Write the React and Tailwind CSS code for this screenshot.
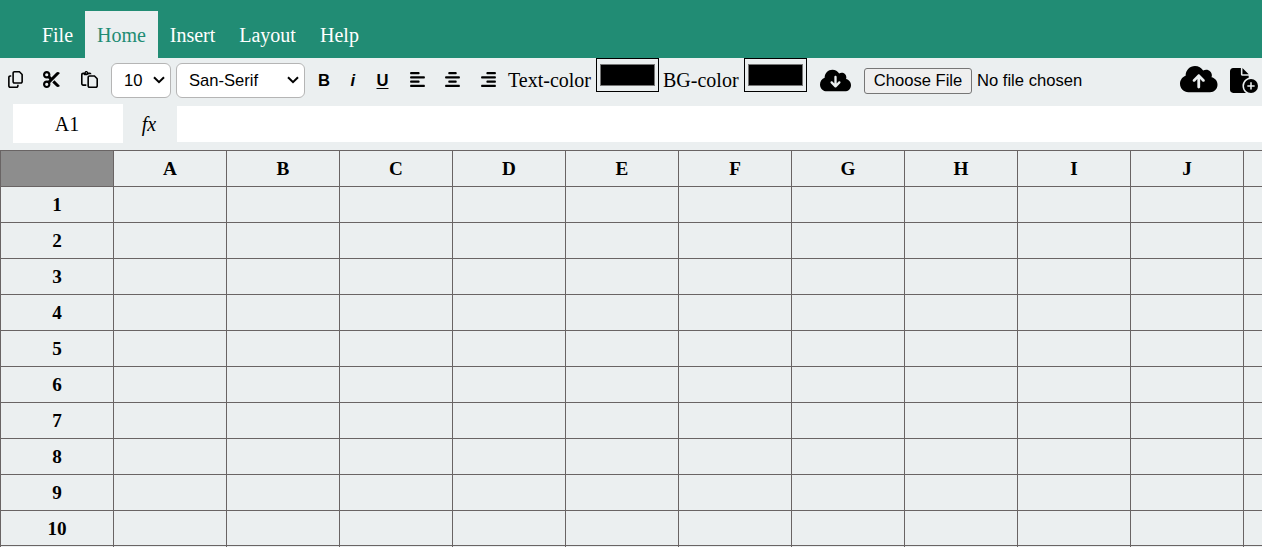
import {
  FaRegCopy,
  FaRegPaste,
  FaScissors,
  FaAlignLeft,
  FaAlignCenter,
  FaAlignRight,
  FaFileCirclePlus,
  FaCloudArrowDown,
  FaCloudArrowUp,
} from "react-icons/fa6";

const MENU = [
  { label: "File", width: "w-[55px]" },
  { label: "Home", width: "w-[73px]", active: true },
  { label: "Insert", width: "w-[69px]" },
  { label: "Layout", width: "w-[81px]" },
  { label: "Help", width: "w-[63px]" },
];

const COLUMNS = ["A", "B", "C", "D", "E", "F", "G", "H", "I", "J", ""];
const ROWS = [1, 2, 3, 4, 5, 6, 7, 8, 9, 10];

function Chevron() {
  return (
    <svg className="h-[8px] w-[12px] shrink-0" viewBox="0 0 12 8" fill="none" stroke="black" strokeWidth="2">
      <path d="M1 1.2 6 6.2 11 1.2" />
    </svg>
  );
}

function Select({ value, className }) {
  return (
    <div className={`flex h-[35px] shrink-0 items-center justify-between rounded-[6px] border border-[#b5b5b5] bg-white pl-3 pr-[5px] font-['Liberation_Sans',sans-serif] text-[16.6px] ${className}`}>
      <span className="pt-[3px]">{value}</span>
      <Chevron />
    </div>
  );
}

function Swatch({ className }) {
  return (
    <div className={`h-[34px] w-[63px] shrink-0 self-start border border-black px-[3px] pt-[5px] ${className}`}>
      <div className="h-[22px] w-full border border-[#767676] bg-black" />
    </div>
  );
}

export default function App() {
  return (
    <div className="h-[547px] w-full overflow-hidden bg-[#ebeff0] font-['Liberation_Serif',serif] text-[20px] text-black">
      <nav className="flex h-[58px] items-end bg-[#218c74] pl-[30px]">
        {MENU.map((m) => (
          <div key={m.label} className={`flex h-[47px] items-center justify-center pt-px ${m.width} ${m.active ? "bg-[#ebeff0] text-[#218c74]" : "text-white"}`}>
            {m.label}
          </div>
        ))}
      </nav>

      <div className="flex h-[44px] items-center whitespace-nowrap">
        <FaRegCopy className="mb-px ml-[7px] h-[17px] w-[17px] shrink-0" />
        <FaScissors className="mb-px ml-[19px] h-[17px] w-[17px] shrink-0" />
        <FaRegPaste className="mb-px ml-[20.5px] h-[17px] w-[17px] shrink-0" />
        <Select value="10" className="ml-[13.5px] w-[60px]" />
        <Select value="San-Serif" className="ml-[5px] w-[129px]" />
        <div className="ml-[13px] flex w-[90.5px] shrink-0 items-center pt-[2px] font-['Liberation_Sans',sans-serif] text-[16.6px] font-bold">
          <span className="w-[32.5px]">B</span>
          <span className="w-[26px] italic">i</span>
          <span className="underline decoration-1 underline-offset-2">U</span>
        </div>
        <FaAlignLeft className="mb-px h-[17px] w-[17px] shrink-0" />
        <FaAlignCenter className="mb-px ml-[18.5px] h-[17px] w-[17px] shrink-0" />
        <FaAlignRight className="mb-px ml-[18.5px] h-[17px] w-[17px] shrink-0" />
        <span className="ml-[11.5px] w-[84px] shrink-0 pb-px">Text-color</span>
        <Swatch className="ml-[4px]" />
        <span className="ml-[4px] w-[77px] shrink-0 pb-px">BG-color</span>
        <Swatch className="ml-[4px]" />
        <FaCloudArrowDown className="ml-[13px] h-[25px] w-[31px] shrink-0" />
        <div className="ml-[13px] mt-px flex h-[26px] w-[108px] shrink-0 items-center justify-center rounded-[3px] border border-[#767676] bg-[#efefef] pt-[2px] font-['Liberation_Sans',sans-serif] text-[16.6px]">
          Choose File
        </div>
        <span className="ml-[5px] pt-[3px] font-['Liberation_Sans',sans-serif] text-[16.6px]">No file chosen</span>
        <FaCloudArrowUp className="mb-[2px] ml-auto h-[30px] w-[37.5px] shrink-0" />
        <FaFileCirclePlus className="ml-[12.5px] mr-[4px] h-[25px] w-[28px] shrink-0" />
      </div>

      <div className="flex h-[48px] items-start pl-[13px] pt-[2px]">
        <div className="flex h-[39px] w-[110px] items-center justify-center bg-white pr-[2px]">A1</div>
        <div className="flex h-[39px] w-[54px] items-center justify-center pr-[2px] italic">fx</div>
        <div className="mt-[2px] h-[36px] flex-1 bg-white" />
      </div>

      <div className="w-[1357px] border-l border-t border-[#696464] text-[19.2px] font-bold">
        <div className="flex">
          <div className="h-[36px] w-[113px] border-b border-r border-[#696464] bg-[#8d8d8d]" />
          {COLUMNS.map((c) => (
            <div key={c} className="flex h-[36px] w-[113px] items-center justify-center border-b border-r border-[#696464] pt-[2px]">
              {c}
            </div>
          ))}
        </div>
        {ROWS.map((r) => (
          <div key={r} className={`flex ${r === 10 ? "h-[35px]" : "h-[36px]"}`}>
            <div className={`flex w-[113px] items-center justify-center border-b border-r border-[#696464] ${r === 10 ? "pt-[3px]" : "pt-[2px]"}`}>{r}</div>
            {COLUMNS.map((c) => (
              <div key={c} className="w-[113px] border-b border-r border-[#696464]" />
            ))}
          </div>
        ))}
        <div className="flex h-px">
          <div className="w-[113px] border-r border-[#696464]" />
          {COLUMNS.map((c) => (
            <div key={c} className="w-[113px] border-r border-[#696464]" />
          ))}
        </div>
      </div>
    </div>
  );
}
